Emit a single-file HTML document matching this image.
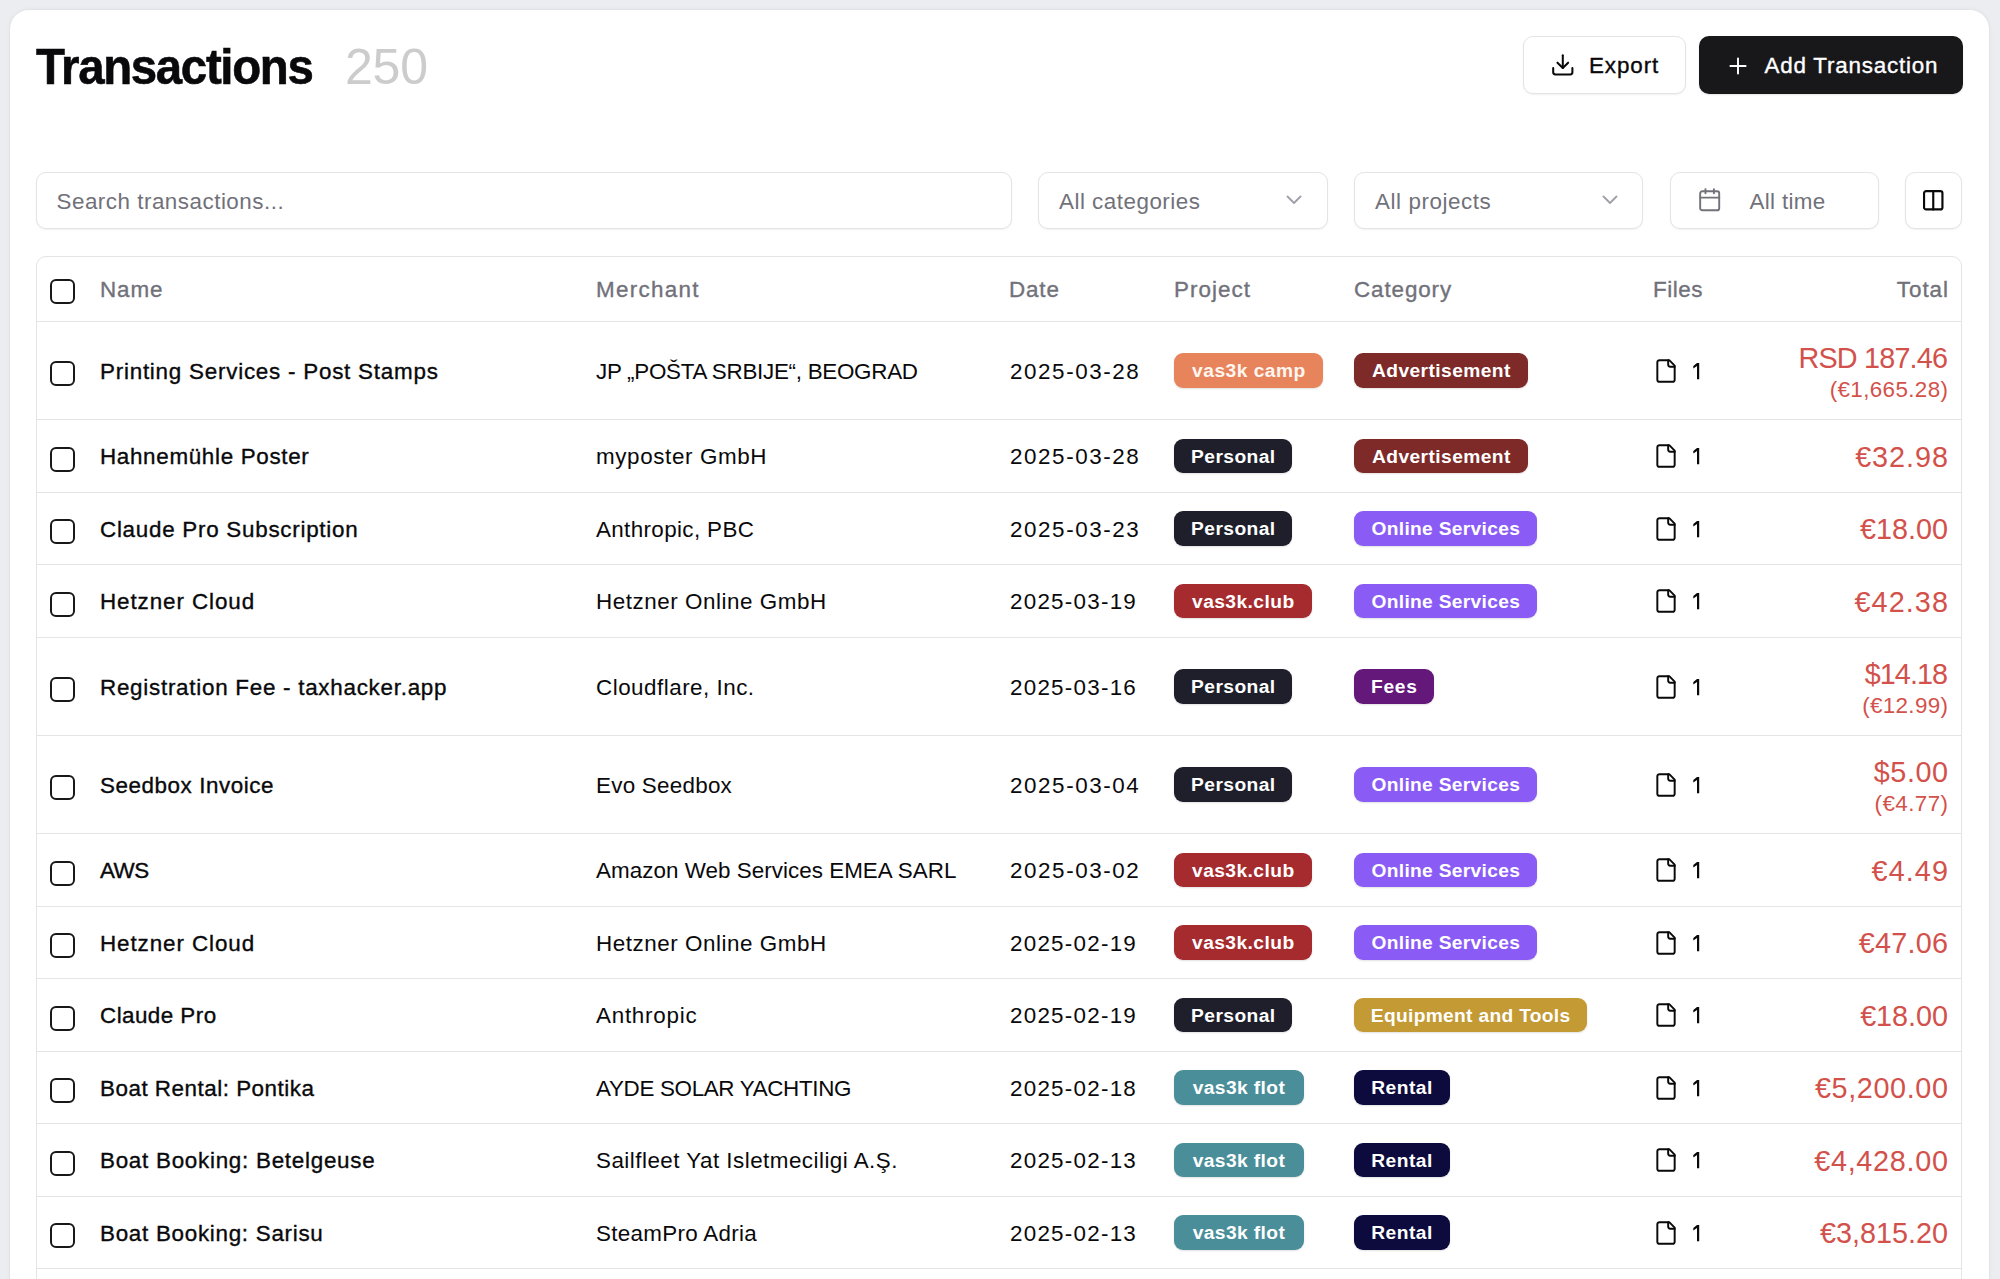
<!DOCTYPE html>
<html><head><meta charset="utf-8"><title>Transactions</title>
<style>
*{box-sizing:border-box;margin:0;padding:0}
html,body{width:2000px;height:1279px;overflow:hidden;background:#ecedf0;font-family:"Liberation Sans",sans-serif;color:#09090b}
.card{position:absolute;left:10px;top:10px;width:1979px;height:1400px;background:#fff;border-radius:19px;box-shadow:0 0 0 1px rgba(0,0,0,0.02),0 0 4px 1px rgba(0,0,0,0.035)}
.abs{position:absolute}
.tx{position:absolute;white-space:nowrap;line-height:50px;height:50px}
.btn{position:absolute;top:36px;height:58px;border-radius:10px;font-size:22.4px;white-space:nowrap}
.export{left:1523px;width:163px;border:1.5px solid #e4e4e7;background:#fff;box-shadow:0 1px 2px rgba(0,0,0,0.06)}
.add{left:1699px;width:264px;background:#18181b;color:#fff;box-shadow:0 1px 2px rgba(0,0,0,0.1)}
.inp{position:absolute;top:172px;height:57px;border:1.5px solid #e4e4e7;border-radius:10px;background:#fff;box-shadow:0 1px 2px rgba(0,0,0,0.06);font-size:22.4px;color:#71717a;white-space:nowrap}
.table{position:absolute;left:36px;top:256px;width:1926px;height:1200px;border:1px solid #e4e4e7;border-radius:10px;background:#fff}
.hdr{position:absolute;left:0;top:0;width:100%;height:65px;border-bottom:1.5px solid #e4e4e7}
.row{position:absolute;left:0;width:100%;border-bottom:1.5px solid #e4e4e7}
.c{position:absolute;top:0;height:100%;display:flex;align-items:center;white-space:nowrap;font-size:22.4px}
.hdr .c{color:#71717a;padding-top:2px}
.hdr .chk{margin-top:2px}
.cb{left:13px}
.chk{display:block;width:25px;height:25px;border:2.1px solid #18181b;border-radius:6px;margin-top:6px}
.name{left:63px}
.merch{left:559px}
.date{left:972px}
.proj{left:1137px}
.cat{left:1317px}
.files{left:1616px}
.total{right:13px;justify-content:flex-end;text-align:right}
.row .name,.row .merch,.row .date{padding-top:2px}
.row .name,.hdr .c,.btn .tx{-webkit-text-stroke:0.35px currentColor}
.row .total{padding-top:1px}
.row .date{left:973px;letter-spacing:1.711px}
.badge{display:inline-block;height:34.3px;line-height:36px;text-align:center;border-radius:9px;font-size:19.2px;font-weight:700;color:#fff;box-shadow:0 1px 2px rgba(0,0,0,0.12)}
.orange{background:#e8845c;color:#fff6f0}
.adv{background:#7d2a29}
.personal{background:#1f1f2b}
.online{background:#8a5cf5}
.club{background:#a62b2e}
.fees{background:#63187a}
.equip{background:#c39a34}
.flot{background:#4a8e99}
.rental{background:#0d0b3d}
.files svg{margin-top:0px}
.fn{margin-left:12px;margin-top:1.2px}
.tot{color:#d3514b}
.t1{font-size:28.8px;line-height:32px}
.t2{font-size:22.4px;line-height:26px;position:relative;top:3px}
</style></head><body>
<div class="card"></div>
<div class="tx" style="left:36px;top:42px;font-size:50px;font-weight:700;letter-spacing:-1.4px;transform:scaleX(0.948);transform-origin:0 0;-webkit-text-stroke:0.6px #09090b">Transactions</div>
<div class="tx" style="left:345px;top:42px;font-size:50px;color:#cccccc;letter-spacing:-0.2px">250</div>
<div class="btn export"><svg class="abs" style="left:25.5px;top:15px" width="25.6" height="25.6" viewBox="0 0 24 24" fill="none" stroke="#09090b" stroke-width="1.9" stroke-linecap="round" stroke-linejoin="round"><path d="M21 15v4a2 2 0 0 1-2 2H5a2 2 0 0 1-2-2v-4"/><path d="M7 10l5 5 5-5"/><path d="M12 15V3"/></svg><span class="tx" style="left:65px;top:4px;letter-spacing:0.9px">Export</span></div>
<div class="btn add"><svg class="abs" style="left:26px;top:16.5px" width="26" height="26" viewBox="0 0 24 24" fill="none" stroke="#fff" stroke-width="1.8" stroke-linecap="round"><path d="M5 12h14"/><path d="M12 5v14"/></svg><span class="tx" style="left:65.5px;top:5px;letter-spacing:0.8px">Add Transaction</span></div>
<div class="inp" style="left:36px;width:976px"><span class="tx" style="left:19.5px;top:3.5px;letter-spacing:0.505px">Search transactions...</span></div>
<div class="inp" style="left:1038px;width:290px"><span class="tx" style="left:20px;top:3.5px;letter-spacing:0.5px">All categories</span><svg class="abs" style="left:247px;top:22px" width="16" height="10" viewBox="0 0 16 10" fill="none" stroke="#a1a1aa" stroke-width="1.9" stroke-linecap="round" stroke-linejoin="round"><path d="M1.5 1.5L8 8L14.5 1.5"/></svg></div>
<div class="inp" style="left:1354px;width:289px"><span class="tx" style="left:20px;top:3.5px;letter-spacing:0.573px">All projects</span><svg class="abs" style="left:247px;top:22px" width="16" height="10" viewBox="0 0 16 10" fill="none" stroke="#a1a1aa" stroke-width="1.9" stroke-linecap="round" stroke-linejoin="round"><path d="M1.5 1.5L8 8L14.5 1.5"/></svg></div>
<div class="inp" style="left:1670px;width:209px"><svg class="abs" style="left:26px;top:14px" width="25.4" height="25.4" viewBox="0 0 24 24" fill="none" stroke="#71717a" stroke-width="1.8" stroke-linecap="round" stroke-linejoin="round"><rect x="3" y="4" width="18" height="18" rx="2"/><path d="M16 2v4"/><path d="M8 2v4"/><path d="M3 10h18"/></svg><span class="tx" style="left:78.5px;top:3.5px;letter-spacing:0.343px">All time</span></div>
<div class="inp" style="left:1905px;width:57px"><svg class="abs" style="left:15px;top:15px" width="24.5" height="24.5" viewBox="0 0 24 24" fill="none" stroke="#09090b" stroke-width="2.1" stroke-linecap="round" stroke-linejoin="round"><rect x="3" y="3" width="18" height="18" rx="2"/><path d="M12 3v18"/></svg></div>
<div class="table">
<div class="hdr">
<div class="c cb"><i class="chk"></i></div>
<div class="c name" style="letter-spacing:0.933px">Name</div>
<div class="c merch" style="letter-spacing:1.3px">Merchant</div>
<div class="c date" style="letter-spacing:0.867px">Date</div>
<div class="c proj" style="letter-spacing:1.067px">Project</div>
<div class="c cat" style="letter-spacing:0.9px">Category</div>
<div class="c files" style="left:1616px;letter-spacing:0.55px">Files</div>
<div class="c total" style="letter-spacing:0.975px;margin-right:-0.975px">Total</div>
</div>
<div class="row" style="top:65px;height:98px">
<div class="c cb"><i class="chk"></i></div>
<div class="c name" style="letter-spacing:0.767px">Printing Services - Post Stamps</div>
<div class="c merch" style="letter-spacing:-0.276px">JP „POŠTA SRBIJE“, BEOGRAD</div>
<div class="c date" style="letter-spacing:1.58px">2025-03-28</div>
<div class="c proj"><span class="badge orange" style="width:149.3px"><span style="letter-spacing:0.478px;margin-right:-0.478px">vas3k camp</span></span></div>
<div class="c cat"><span class="badge adv" style="width:174.4px"><span style="letter-spacing:0.417px;margin-right:-0.417px">Advertisement</span></span></div>
<div class="c files"><svg width="26" height="26" viewBox="0 0 24 24" fill="none" stroke="#09090b" stroke-width="1.8" stroke-linecap="round" stroke-linejoin="round"><path d="M15 2H6a2 2 0 0 0-2 2v16a2 2 0 0 0 2 2h12a2 2 0 0 0 2-2V7Z"/><path d="M14 2v4a2 2 0 0 0 2 2h4"/></svg><svg class="fn" width="12" height="20" viewBox="0 0 12 20"><path fill="#09090b" d="M6 2H8.2V18.2H6V4.9L2.3 7.5V5.1Z"/></svg></div>
<div class="c total"><div class="tot"><div class="t1" style="letter-spacing:-0.811px;margin-right:0.811px">RSD 187.46</div><div class="t2" style="letter-spacing:0.38px;margin-right:-0.38px">(€1,665.28)</div></div></div>
</div><div class="row" style="top:163px;height:73px">
<div class="c cb"><i class="chk"></i></div>
<div class="c name" style="letter-spacing:0.681px">Hahnemühle Poster</div>
<div class="c merch" style="letter-spacing:0.625px">myposter GmbH</div>
<div class="c date" style="letter-spacing:1.58px">2025-03-28</div>
<div class="c proj"><span class="badge personal" style="width:118.3px"><span style="letter-spacing:0.429px;margin-right:-0.429px">Personal</span></span></div>
<div class="c cat"><span class="badge adv" style="width:174.4px"><span style="letter-spacing:0.417px;margin-right:-0.417px">Advertisement</span></span></div>
<div class="c files"><svg width="26" height="26" viewBox="0 0 24 24" fill="none" stroke="#09090b" stroke-width="1.8" stroke-linecap="round" stroke-linejoin="round"><path d="M15 2H6a2 2 0 0 0-2 2v16a2 2 0 0 0 2 2h12a2 2 0 0 0 2-2V7Z"/><path d="M14 2v4a2 2 0 0 0 2 2h4"/></svg><svg class="fn" width="12" height="20" viewBox="0 0 12 20"><path fill="#09090b" d="M6 2H8.2V18.2H6V4.9L2.3 7.5V5.1Z"/></svg></div>
<div class="c total"><div class="tot"><div class="t1" style="letter-spacing:0.95px;margin-right:-0.95px">€32.98</div></div></div>
</div><div class="row" style="top:236px;height:72px">
<div class="c cb"><i class="chk"></i></div>
<div class="c name" style="letter-spacing:0.736px">Claude Pro Subscription</div>
<div class="c merch" style="letter-spacing:0.369px">Anthropic, PBC</div>
<div class="c date" style="letter-spacing:1.58px">2025-03-23</div>
<div class="c proj"><span class="badge personal" style="width:118.3px"><span style="letter-spacing:0.429px;margin-right:-0.429px">Personal</span></span></div>
<div class="c cat"><span class="badge online" style="width:183.4px"><span style="letter-spacing:0.314px;margin-right:-0.314px">Online Services</span></span></div>
<div class="c files"><svg width="26" height="26" viewBox="0 0 24 24" fill="none" stroke="#09090b" stroke-width="1.8" stroke-linecap="round" stroke-linejoin="round"><path d="M15 2H6a2 2 0 0 0-2 2v16a2 2 0 0 0 2 2h12a2 2 0 0 0 2-2V7Z"/><path d="M14 2v4a2 2 0 0 0 2 2h4"/></svg><svg class="fn" width="12" height="20" viewBox="0 0 12 20"><path fill="#09090b" d="M6 2H8.2V18.2H6V4.9L2.3 7.5V5.1Z"/></svg></div>
<div class="c total"><div class="tot"><div class="t1" style="letter-spacing:-0.02px;margin-right:0.02px">€18.00</div></div></div>
</div><div class="row" style="top:308px;height:73px">
<div class="c cb"><i class="chk"></i></div>
<div class="c name" style="letter-spacing:0.917px">Hetzner Cloud</div>
<div class="c merch" style="letter-spacing:0.55px">Hetzner Online GmbH</div>
<div class="c date" style="letter-spacing:1.25px">2025-03-19</div>
<div class="c proj"><span class="badge club" style="width:138.2px"><span style="letter-spacing:0.444px;margin-right:-0.444px">vas3k.club</span></span></div>
<div class="c cat"><span class="badge online" style="width:183.4px"><span style="letter-spacing:0.314px;margin-right:-0.314px">Online Services</span></span></div>
<div class="c files"><svg width="26" height="26" viewBox="0 0 24 24" fill="none" stroke="#09090b" stroke-width="1.8" stroke-linecap="round" stroke-linejoin="round"><path d="M15 2H6a2 2 0 0 0-2 2v16a2 2 0 0 0 2 2h12a2 2 0 0 0 2-2V7Z"/><path d="M14 2v4a2 2 0 0 0 2 2h4"/></svg><svg class="fn" width="12" height="20" viewBox="0 0 12 20"><path fill="#09090b" d="M6 2H8.2V18.2H6V4.9L2.3 7.5V5.1Z"/></svg></div>
<div class="c total"><div class="tot"><div class="t1" style="letter-spacing:1.1px;margin-right:-1.1px">€42.38</div></div></div>
</div><div class="row" style="top:381px;height:98px">
<div class="c cb"><i class="chk"></i></div>
<div class="c name" style="letter-spacing:0.739px">Registration Fee - taxhacker.app</div>
<div class="c merch" style="letter-spacing:0.5px">Cloudflare, Inc.</div>
<div class="c date" style="letter-spacing:1.25px">2025-03-16</div>
<div class="c proj"><span class="badge personal" style="width:118.3px"><span style="letter-spacing:0.429px;margin-right:-0.429px">Personal</span></span></div>
<div class="c cat"><span class="badge fees" style="width:80px"><span style="letter-spacing:0.733px;margin-right:-0.733px">Fees</span></span></div>
<div class="c files"><svg width="26" height="26" viewBox="0 0 24 24" fill="none" stroke="#09090b" stroke-width="1.8" stroke-linecap="round" stroke-linejoin="round"><path d="M15 2H6a2 2 0 0 0-2 2v16a2 2 0 0 0 2 2h12a2 2 0 0 0 2-2V7Z"/><path d="M14 2v4a2 2 0 0 0 2 2h4"/></svg><svg class="fn" width="12" height="20" viewBox="0 0 12 20"><path fill="#09090b" d="M6 2H8.2V18.2H6V4.9L2.3 7.5V5.1Z"/></svg></div>
<div class="c total"><div class="tot"><div class="t1" style="letter-spacing:-0.96px;margin-right:0.96px">$14.18</div><div class="t2" style="letter-spacing:0.343px;margin-right:-0.343px">(€12.99)</div></div></div>
</div><div class="row" style="top:479px;height:98px">
<div class="c cb"><i class="chk"></i></div>
<div class="c name" style="letter-spacing:0.564px">Seedbox Invoice</div>
<div class="c merch" style="letter-spacing:0.26px">Evo Seedbox</div>
<div class="c date" style="letter-spacing:1.58px">2025-03-04</div>
<div class="c proj"><span class="badge personal" style="width:118.3px"><span style="letter-spacing:0.429px;margin-right:-0.429px">Personal</span></span></div>
<div class="c cat"><span class="badge online" style="width:183.4px"><span style="letter-spacing:0.314px;margin-right:-0.314px">Online Services</span></span></div>
<div class="c files"><svg width="26" height="26" viewBox="0 0 24 24" fill="none" stroke="#09090b" stroke-width="1.8" stroke-linecap="round" stroke-linejoin="round"><path d="M15 2H6a2 2 0 0 0-2 2v16a2 2 0 0 0 2 2h12a2 2 0 0 0 2-2V7Z"/><path d="M14 2v4a2 2 0 0 0 2 2h4"/></svg><svg class="fn" width="12" height="20" viewBox="0 0 12 20"><path fill="#09090b" d="M6 2H8.2V18.2H6V4.9L2.3 7.5V5.1Z"/></svg></div>
<div class="c total"><div class="tot"><div class="t1" style="letter-spacing:0.525px;margin-right:-0.525px">$5.00</div><div class="t2" style="letter-spacing:0.417px;margin-right:-0.417px">(€4.77)</div></div></div>
</div><div class="row" style="top:577px;height:73px">
<div class="c cb"><i class="chk"></i></div>
<div class="c name" style="letter-spacing:-0.5px">AWS</div>
<div class="c merch" style="letter-spacing:0.043px">Amazon Web Services EMEA SARL</div>
<div class="c date" style="letter-spacing:1.58px">2025-03-02</div>
<div class="c proj"><span class="badge club" style="width:138.2px"><span style="letter-spacing:0.444px;margin-right:-0.444px">vas3k.club</span></span></div>
<div class="c cat"><span class="badge online" style="width:183.4px"><span style="letter-spacing:0.314px;margin-right:-0.314px">Online Services</span></span></div>
<div class="c files"><svg width="26" height="26" viewBox="0 0 24 24" fill="none" stroke="#09090b" stroke-width="1.8" stroke-linecap="round" stroke-linejoin="round"><path d="M15 2H6a2 2 0 0 0-2 2v16a2 2 0 0 0 2 2h12a2 2 0 0 0 2-2V7Z"/><path d="M14 2v4a2 2 0 0 0 2 2h4"/></svg><svg class="fn" width="12" height="20" viewBox="0 0 12 20"><path fill="#09090b" d="M6 2H8.2V18.2H6V4.9L2.3 7.5V5.1Z"/></svg></div>
<div class="c total"><div class="tot"><div class="t1" style="letter-spacing:1.075px;margin-right:-1.075px">€4.49</div></div></div>
</div><div class="row" style="top:650px;height:72px">
<div class="c cb"><i class="chk"></i></div>
<div class="c name" style="letter-spacing:0.917px">Hetzner Cloud</div>
<div class="c merch" style="letter-spacing:0.55px">Hetzner Online GmbH</div>
<div class="c date" style="letter-spacing:1.25px">2025-02-19</div>
<div class="c proj"><span class="badge club" style="width:138.2px"><span style="letter-spacing:0.444px;margin-right:-0.444px">vas3k.club</span></span></div>
<div class="c cat"><span class="badge online" style="width:183.4px"><span style="letter-spacing:0.314px;margin-right:-0.314px">Online Services</span></span></div>
<div class="c files"><svg width="26" height="26" viewBox="0 0 24 24" fill="none" stroke="#09090b" stroke-width="1.8" stroke-linecap="round" stroke-linejoin="round"><path d="M15 2H6a2 2 0 0 0-2 2v16a2 2 0 0 0 2 2h12a2 2 0 0 0 2-2V7Z"/><path d="M14 2v4a2 2 0 0 0 2 2h4"/></svg><svg class="fn" width="12" height="20" viewBox="0 0 12 20"><path fill="#09090b" d="M6 2H8.2V18.2H6V4.9L2.3 7.5V5.1Z"/></svg></div>
<div class="c total"><div class="tot"><div class="t1" style="letter-spacing:0.22px;margin-right:-0.22px">€47.06</div></div></div>
</div><div class="row" style="top:722px;height:73px">
<div class="c cb"><i class="chk"></i></div>
<div class="c name" style="letter-spacing:0.456px">Claude Pro</div>
<div class="c merch" style="letter-spacing:0.75px">Anthropic</div>
<div class="c date" style="letter-spacing:1.25px">2025-02-19</div>
<div class="c proj"><span class="badge personal" style="width:118.3px"><span style="letter-spacing:0.429px;margin-right:-0.429px">Personal</span></span></div>
<div class="c cat"><span class="badge equip" style="width:233px"><span style="letter-spacing:0.317px;margin-right:-0.317px">Equipment and Tools</span></span></div>
<div class="c files"><svg width="26" height="26" viewBox="0 0 24 24" fill="none" stroke="#09090b" stroke-width="1.8" stroke-linecap="round" stroke-linejoin="round"><path d="M15 2H6a2 2 0 0 0-2 2v16a2 2 0 0 0 2 2h12a2 2 0 0 0 2-2V7Z"/><path d="M14 2v4a2 2 0 0 0 2 2h4"/></svg><svg class="fn" width="12" height="20" viewBox="0 0 12 20"><path fill="#09090b" d="M6 2H8.2V18.2H6V4.9L2.3 7.5V5.1Z"/></svg></div>
<div class="c total"><div class="tot"><div class="t1" style="letter-spacing:-0.04px;margin-right:0.04px">€18.00</div></div></div>
</div><div class="row" style="top:795px;height:72px">
<div class="c cb"><i class="chk"></i></div>
<div class="c name" style="letter-spacing:0.516px">Boat Rental: Pontika</div>
<div class="c merch" style="letter-spacing:-0.322px">AYDE SOLAR YACHTING</div>
<div class="c date" style="letter-spacing:1.25px">2025-02-18</div>
<div class="c proj"><span class="badge flot" style="width:129.6px"><span style="letter-spacing:0.4px;margin-right:-0.4px">vas3k flot</span></span></div>
<div class="c cat"><span class="badge rental" style="width:95.6px"><span style="letter-spacing:0.5px;margin-right:-0.5px">Rental</span></span></div>
<div class="c files"><svg width="26" height="26" viewBox="0 0 24 24" fill="none" stroke="#09090b" stroke-width="1.8" stroke-linecap="round" stroke-linejoin="round"><path d="M15 2H6a2 2 0 0 0-2 2v16a2 2 0 0 0 2 2h12a2 2 0 0 0 2-2V7Z"/><path d="M14 2v4a2 2 0 0 0 2 2h4"/></svg><svg class="fn" width="12" height="20" viewBox="0 0 12 20"><path fill="#09090b" d="M6 2H8.2V18.2H6V4.9L2.3 7.5V5.1Z"/></svg></div>
<div class="c total"><div class="tot"><div class="t1" style="letter-spacing:0.613px;margin-right:-0.613px">€5,200.00</div></div></div>
</div><div class="row" style="top:867px;height:73px">
<div class="c cb"><i class="chk"></i></div>
<div class="c name" style="letter-spacing:0.739px">Boat Booking: Betelgeuse</div>
<div class="c merch" style="letter-spacing:0.477px">Sailfleet Yat Isletmeciligi A.Ş.</div>
<div class="c date" style="letter-spacing:1.25px">2025-02-13</div>
<div class="c proj"><span class="badge flot" style="width:129.6px"><span style="letter-spacing:0.4px;margin-right:-0.4px">vas3k flot</span></span></div>
<div class="c cat"><span class="badge rental" style="width:95.6px"><span style="letter-spacing:0.5px;margin-right:-0.5px">Rental</span></span></div>
<div class="c files"><svg width="26" height="26" viewBox="0 0 24 24" fill="none" stroke="#09090b" stroke-width="1.8" stroke-linecap="round" stroke-linejoin="round"><path d="M15 2H6a2 2 0 0 0-2 2v16a2 2 0 0 0 2 2h12a2 2 0 0 0 2-2V7Z"/><path d="M14 2v4a2 2 0 0 0 2 2h4"/></svg><svg class="fn" width="12" height="20" viewBox="0 0 12 20"><path fill="#09090b" d="M6 2H8.2V18.2H6V4.9L2.3 7.5V5.1Z"/></svg></div>
<div class="c total"><div class="tot"><div class="t1" style="letter-spacing:0.713px;margin-right:-0.713px">€4,428.00</div></div></div>
</div><div class="row" style="top:940px;height:72px">
<div class="c cb"><i class="chk"></i></div>
<div class="c name" style="letter-spacing:0.721px">Boat Booking: Sarisu</div>
<div class="c merch" style="letter-spacing:0.308px">SteamPro Adria</div>
<div class="c date" style="letter-spacing:1.25px">2025-02-13</div>
<div class="c proj"><span class="badge flot" style="width:129.6px"><span style="letter-spacing:0.4px;margin-right:-0.4px">vas3k flot</span></span></div>
<div class="c cat"><span class="badge rental" style="width:95.6px"><span style="letter-spacing:0.5px;margin-right:-0.5px">Rental</span></span></div>
<div class="c files"><svg width="26" height="26" viewBox="0 0 24 24" fill="none" stroke="#09090b" stroke-width="1.8" stroke-linecap="round" stroke-linejoin="round"><path d="M15 2H6a2 2 0 0 0-2 2v16a2 2 0 0 0 2 2h12a2 2 0 0 0 2-2V7Z"/><path d="M14 2v4a2 2 0 0 0 2 2h4"/></svg><svg class="fn" width="12" height="20" viewBox="0 0 12 20"><path fill="#09090b" d="M6 2H8.2V18.2H6V4.9L2.3 7.5V5.1Z"/></svg></div>
<div class="c total"><div class="tot"><div class="t1" style="letter-spacing:0.0px;margin-right:-0.0px">€3,815.20</div></div></div>
</div>
</div>
</body></html>
